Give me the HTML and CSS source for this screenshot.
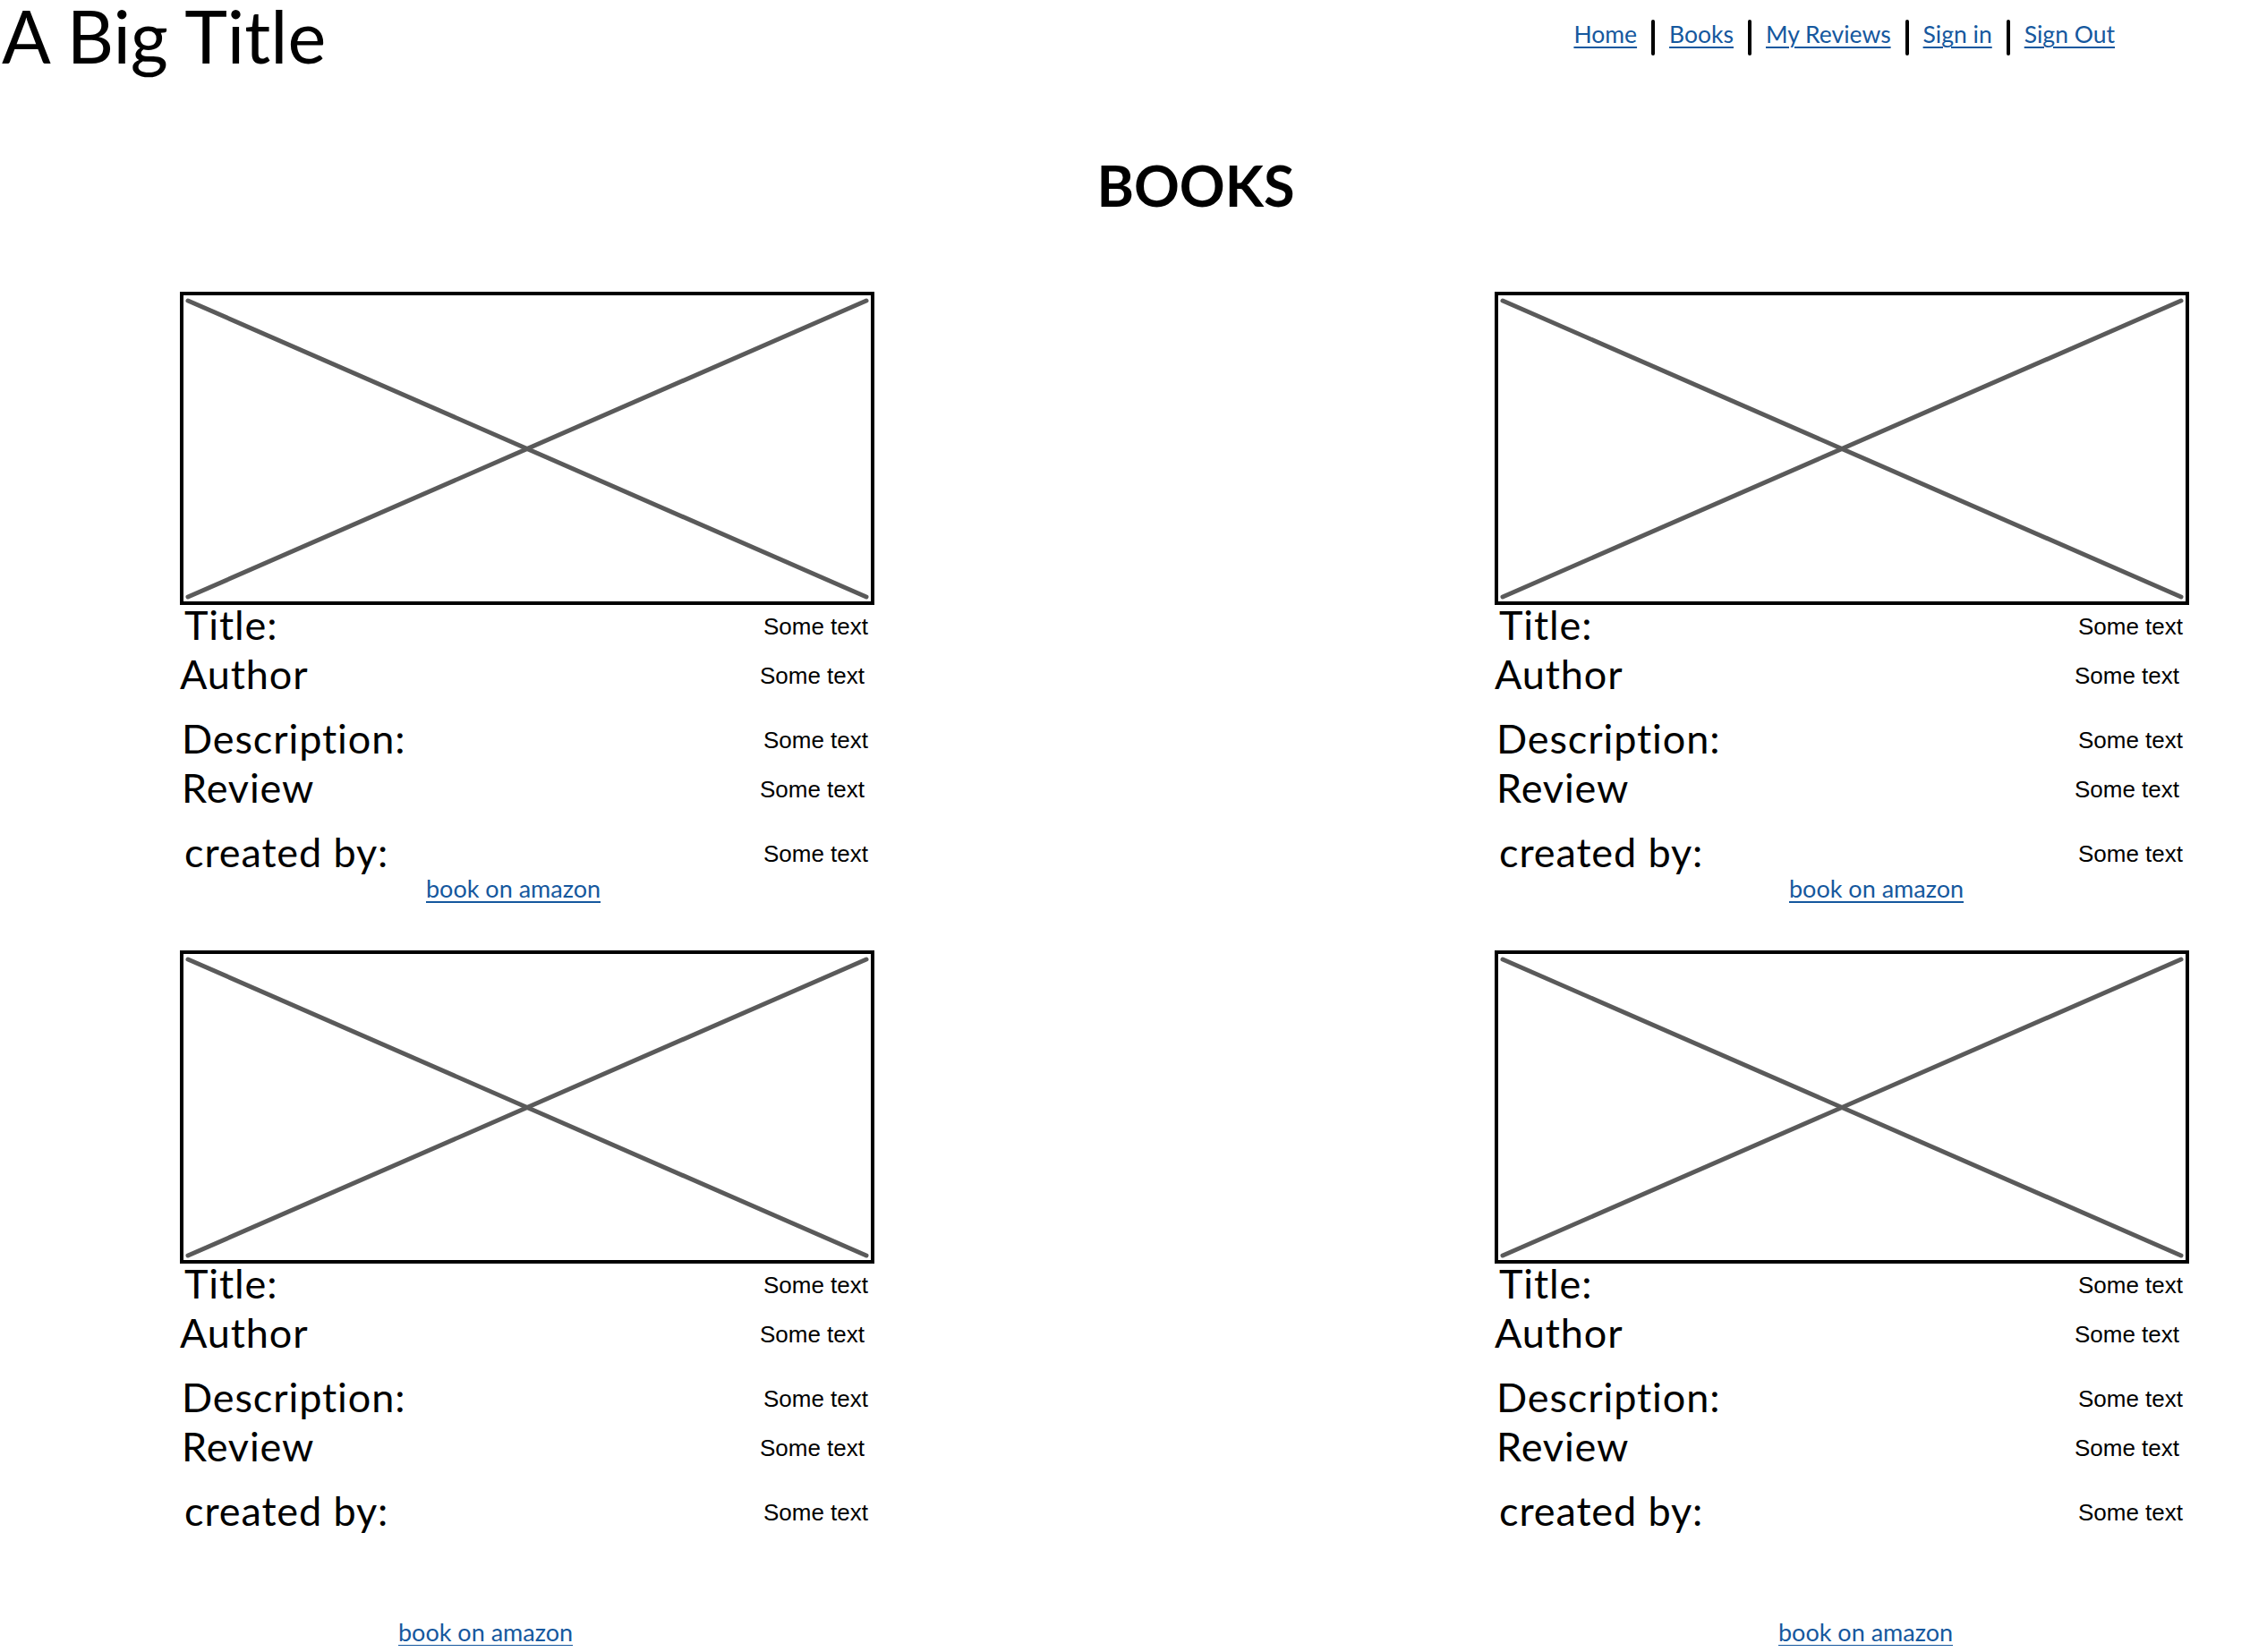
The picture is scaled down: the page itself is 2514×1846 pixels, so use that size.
FILE: index.html
```html
<!DOCTYPE html>
<html lang="en">
<head>
  <meta charset="UTF-8" />
  <meta name="viewport" content="width=device-width, initial-scale=1.0"/>
  <title>Books</title>
  <link rel="stylesheet" href="styles.css">
</head>
<body>

<!-- Header -->
<div class="header">
  <h1 class="site-title">A Big Title</h1>
  <nav class="nav">
    <a href="#">Home</a>
    <span class="sep"></span>
    <a href="#">Books</a>
    <span class="sep"></span>
    <a href="#">My Reviews</a>
    <span class="sep"></span>
    <a href="#">Sign in</a>
    <span class="sep"></span>
    <a href="#">Sign Out</a>
  </nav>
</div>

<!-- Book list -->
<div class="main">
  <h2 class="page-title">BOOKS</h2>

  <div class="books">

    <div class="card">
      <div class="pic">
        <svg viewBox="0 0 768 342" preserveAspectRatio="none">
          <line x1="5" y1="6" x2="763" y2="337" />
          <line x1="5" y1="337" x2="763" y2="6" />
        </svg>
      </div>
      <div class="row row-a"><span class="label">Title:</span><span class="value">Some text</span></div>
      <div class="row row-b"><span class="label">Author</span><span class="value">Some text</span></div>
      <div class="row row-c gap"><span class="label">Description:</span><span class="value">Some text</span></div>
      <div class="row row-d"><span class="label">Review</span><span class="value">Some text</span></div>
      <div class="row row-a gap"><span class="label">created by:</span><span class="value">Some text</span></div>
      <div class="buy buy-1"><a href="#">book on amazon</a></div>
    </div>

    <div class="card">
      <div class="pic">
        <svg viewBox="0 0 768 342" preserveAspectRatio="none">
          <line x1="5" y1="6" x2="763" y2="337" />
          <line x1="5" y1="337" x2="763" y2="6" />
        </svg>
      </div>
      <div class="row row-a"><span class="label">Title:</span><span class="value">Some text</span></div>
      <div class="row row-b"><span class="label">Author</span><span class="value">Some text</span></div>
      <div class="row row-c gap"><span class="label">Description:</span><span class="value">Some text</span></div>
      <div class="row row-d"><span class="label">Review</span><span class="value">Some text</span></div>
      <div class="row row-a gap"><span class="label">created by:</span><span class="value">Some text</span></div>
      <div class="buy buy-2"><a href="#">book on amazon</a></div>
    </div>

    <div class="card">
      <div class="pic">
        <svg viewBox="0 0 768 342" preserveAspectRatio="none">
          <line x1="5" y1="6" x2="763" y2="337" />
          <line x1="5" y1="337" x2="763" y2="6" />
        </svg>
      </div>
      <div class="row row-a"><span class="label">Title:</span><span class="value">Some text</span></div>
      <div class="row row-b"><span class="label">Author</span><span class="value">Some text</span></div>
      <div class="row row-c gap"><span class="label">Description:</span><span class="value">Some text</span></div>
      <div class="row row-d"><span class="label">Review</span><span class="value">Some text</span></div>
      <div class="row row-a gap"><span class="label">created by:</span><span class="value">Some text</span></div>
      <div class="buy buy-3"><a href="#">book on amazon</a></div>
    </div>

    <div class="card">
      <div class="pic">
        <svg viewBox="0 0 768 342" preserveAspectRatio="none">
          <line x1="5" y1="6" x2="763" y2="337" />
          <line x1="5" y1="337" x2="763" y2="6" />
        </svg>
      </div>
      <div class="row row-a"><span class="label">Title:</span><span class="value">Some text</span></div>
      <div class="row row-b"><span class="label">Author</span><span class="value">Some text</span></div>
      <div class="row row-c gap"><span class="label">Description:</span><span class="value">Some text</span></div>
      <div class="row row-d"><span class="label">Review</span><span class="value">Some text</span></div>
      <div class="row row-a gap"><span class="label">created by:</span><span class="value">Some text</span></div>
      <div class="buy buy-4"><a href="#">book on amazon</a></div>
    </div>

  </div>
</div>

</body>
</html>
```

FILE: styles.css
```css
body {
  font-family: Lato, "Open Sans", sans-serif;
  background: #fff;
  color: #000;
  margin: 0;
  padding: 0;
}
a {
  color: #15589e;
  text-decoration: underline;
  text-decoration-thickness: 2px;
  text-underline-offset: 4px;
}
.header {
  display: flex;
  justify-content: space-between;
  align-items: flex-start;
  height: 80px;
  padding: 0 151px 0 2px;
}
.site-title {
  margin: 0;
  font-size: 81px;
  font-weight: 400;
  line-height: 80px;
}
.nav {
  display: flex;
  align-items: flex-start;
  gap: 16px;
  margin-top: 22px;
}
.nav a {
  font-size: 26.5px;
  line-height: 33px;
}
.sep {
  width: 4px;
  height: 40px;
  background: #000;
  border-radius: 2px;
}
.main {
  padding: 0 69px 0 201px;
}
.page-title {
  margin: 95px 0 88px;
  padding-left: 26px;
  text-align: center;
  font-size: 63px;
  font-weight: 700;
  line-height: 63px;
}
.books {
  display: grid;
  grid-template-columns: 776px 776px;
  column-gap: 693px;
  row-gap: 54px;
  align-items: start;
}
.pic {
  height: 350px;
  border: 4px solid #000;
  box-sizing: border-box;
}
.pic svg {
  display: block;
  width: 100%;
  height: 100%;
}
.pic line {
  stroke: #5a5a5a;
  stroke-width: 5;
  stroke-linecap: round;
}
.row {
  display: flex;
  justify-content: space-between;
  align-items: flex-start;
  margin-top: 11px;
}
.pic + .row {
  margin-top: 0;
}
.row.gap {
  margin-top: 28px;
}
.label {
  font-size: 45px;
  line-height: 44px;
  letter-spacing: 0.9px;
}
.value {
  font-family: "Liberation Sans", Arial, sans-serif;
  font-size: 26px;
  line-height: 27px;
  padding-top: 11px;
}
.row-a .label { padding-left: 5px; }
.row-a .value { padding-right: 7px; }
.row-b .value { padding-right: 11px; }
.row-c .label { padding-left: 2px; }
.row-c .value { padding-right: 7px; }
.row-d .label { padding-left: 2px; }
.row-d .value { padding-right: 11px; }
.buy {
  font-size: 27px;
  line-height: 30px;
  margin-top: 4px;
}
.buy-1 { padding-left: 275px; }
.buy-2 { padding-left: 329px; }
.buy-3 { padding-left: 244px; margin-top: 99px; }
.buy-4 { padding-left: 317px; margin-top: 99px; }
```
